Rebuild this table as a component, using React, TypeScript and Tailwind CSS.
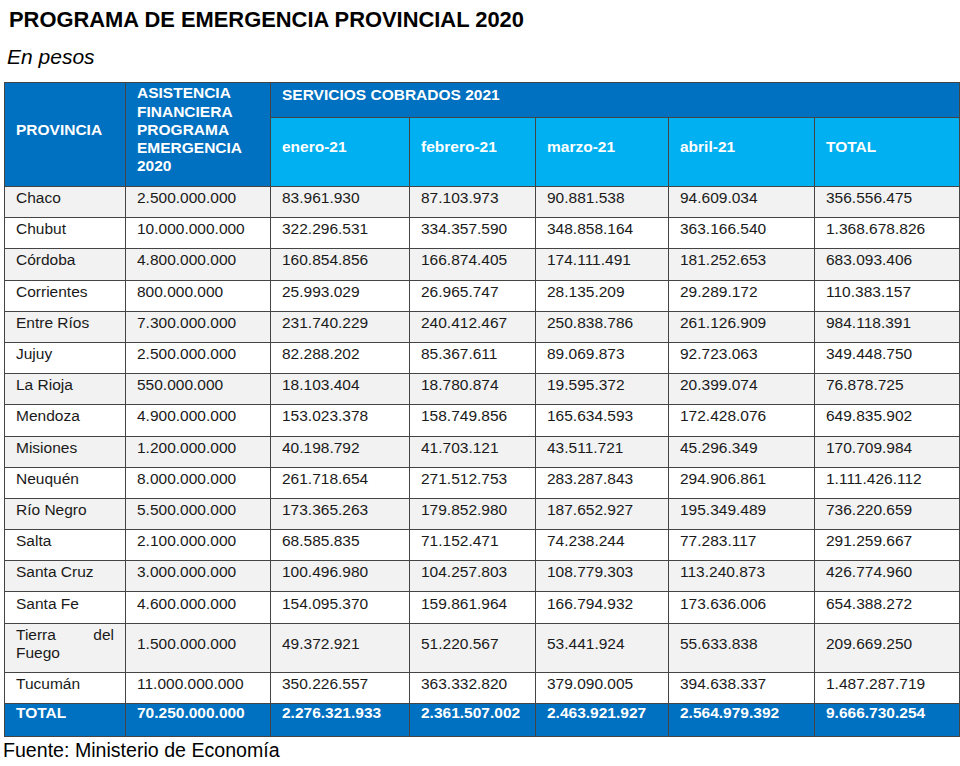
import React from "react";

const rows: string[][] = [
  ["Chaco", "2.500.000.000", "83.961.930", "87.103.973", "90.881.538", "94.609.034", "356.556.475"],
  ["Chubut", "10.000.000.000", "322.296.531", "334.357.590", "348.858.164", "363.166.540", "1.368.678.826"],
  ["Córdoba", "4.800.000.000", "160.854.856", "166.874.405", "174.111.491", "181.252.653", "683.093.406"],
  ["Corrientes", "800.000.000", "25.993.029", "26.965.747", "28.135.209", "29.289.172", "110.383.157"],
  ["Entre Ríos", "7.300.000.000", "231.740.229", "240.412.467", "250.838.786", "261.126.909", "984.118.391"],
  ["Jujuy", "2.500.000.000", "82.288.202", "85.367.611", "89.069.873", "92.723.063", "349.448.750"],
  ["La Rioja", "550.000.000", "18.103.404", "18.780.874", "19.595.372", "20.399.074", "76.878.725"],
  ["Mendoza", "4.900.000.000", "153.023.378", "158.749.856", "165.634.593", "172.428.076", "649.835.902"],
  ["Misiones", "1.200.000.000", "40.198.792", "41.703.121", "43.511.721", "45.296.349", "170.709.984"],
  ["Neuquén", "8.000.000.000", "261.718.654", "271.512.753", "283.287.843", "294.906.861", "1.111.426.112"],
  ["Río Negro", "5.500.000.000", "173.365.263", "179.852.980", "187.652.927", "195.349.489", "736.220.659"],
  ["Salta", "2.100.000.000", "68.585.835", "71.152.471", "74.238.244", "77.283.117", "291.259.667"],
  ["Santa Cruz", "3.000.000.000", "100.496.980", "104.257.803", "108.779.303", "113.240.873", "426.774.960"],
  ["Santa Fe", "4.600.000.000", "154.095.370", "159.861.964", "166.794.932", "173.636.006", "654.388.272"],
  ["Tierra del Fuego", "1.500.000.000", "49.372.921", "51.220.567", "53.441.924", "55.633.838", "209.669.250"],
  ["Tucumán", "11.000.000.000", "350.226.557", "363.332.820", "379.090.005", "394.638.337", "1.487.287.719"],
];

const total = ["TOTAL", "70.250.000.000", "2.276.321.933", "2.361.507.002", "2.463.921.927", "2.564.979.392", "9.666.730.254"];

const bd = "border-[1.5px] border-solid border-[#444444]";

export default function App() {
  return (
    <div
      className="w-[960px] h-[766px] bg-white text-[#1a1a1a] overflow-hidden"
      style={{ fontFamily: '"Liberation Sans", Arial, sans-serif' }}
    >
      <div className="pt-[7px] pl-[9px] text-[21.9px] leading-[26px] font-bold text-black">
        PROGRAMA DE EMERGENCIA PROVINCIAL 2020
      </div>
      <div className="mt-[11px] pl-[7px] text-[21px] leading-[26px] italic text-black">En pesos</div>
      <table className="mt-[12px] ml-[4px] w-[955px] table-fixed border-collapse text-[15.5px] leading-[18px]">
        <colgroup>
          <col className="w-[121px]" />
          <col className="w-[145px]" />
          <col className="w-[139px]" />
          <col className="w-[126px]" />
          <col className="w-[133px]" />
          <col className="w-[146px]" />
          <col className="w-[145px]" />
        </colgroup>
        <thead>
          <tr className="h-[35px]">
            <th
              rowSpan={2}
              className={`${bd} bg-[#0070c0] text-white font-bold text-left align-middle pl-[11px] pr-[8px] pb-[9px]`}
            >
              PROVINCIA
            </th>
            <th
              rowSpan={2}
              className={`${bd} bg-[#0070c0] text-white font-bold text-left align-middle pl-[11px] pr-[8px] pb-[9px] leading-[18.3px]`}
            >
              ASISTENCIA
              <br />
              FINANCIERA
              <br />
              PROGRAMA
              <br />
              EMERGENCIA
              <br />
              2020
            </th>
            <th
              colSpan={5}
              className={`${bd} bg-[#0070c0] text-white font-bold text-left align-middle pl-[11px] pb-[10px]`}
            >
              SERVICIOS COBRADOS 2021
            </th>
          </tr>
          <tr className="h-[69px]">
            {["enero-21", "febrero-21", "marzo-21", "abril-21", "TOTAL"].map((m) => (
              <th
                key={m}
                className={`${bd} bg-[#00b0f0] text-white font-bold text-left align-middle pl-[11px] pb-[10px]`}
              >
                {m}
              </th>
            ))}
          </tr>
        </thead>
        <tbody>
          {rows.map((r, i) => {
            const tall = r[0] === "Tierra del Fuego";
            return (
              <tr key={r[0]} className={`${tall ? "h-[49px]" : "h-[31.2px]"} ${i % 2 === 0 ? "bg-[#f2f2f2]" : "bg-white"}`}>
                {r.map((c, j) => (
                  <td
                    key={j}
                    className={`${bd} align-middle pl-[11px] pr-[11px] pb-[8px] ${
                      j === 0 && tall ? "text-justify leading-[18px]" : "text-left whitespace-nowrap"
                    }`}
                  >
                    {c}
                  </td>
                ))}
              </tr>
            );
          })}
          <tr className="h-[33px] bg-[#0070c0]">
            {total.map((c, j) => (
              <td
                key={j}
                className={`${bd} align-middle pl-[11px] pb-[14px] text-white font-bold text-left whitespace-nowrap`}
              >
                {c}
              </td>
            ))}
          </tr>
        </tbody>
      </table>
      <div className="mt-[2px] pl-[3px] text-[19.6px] leading-[22px] text-black">Fuente: Ministerio de Economía</div>
    </div>
  );
}
